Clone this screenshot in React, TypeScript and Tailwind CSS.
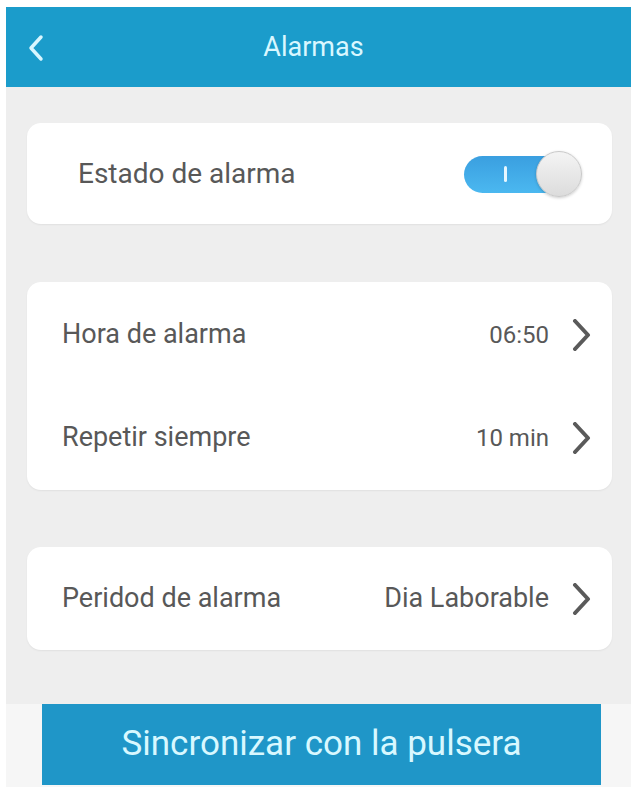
import React from 'react';

const font = { fontFamily: 'Roboto, "Noto Sans", Arial, sans-serif' };

function Chevron() {
  return (
    <svg width="20" height="32" viewBox="0 0 20 32" className="ml-[22px] shrink-0">
      <path d="M4 2 L17 16 L4 30" fill="none" stroke="#5a5a5a" strokeWidth="4" strokeLinecap="round" strokeLinejoin="round" />
    </svg>
  );
}

function Row({ label, value, small }: { label: string; value: string; small?: boolean }) {
  return (
    <div className="flex h-[103px] items-center pl-[35px] pr-[21px]">
      <span className="flex-1 text-[27px] text-[#585858]">{label}</span>
      <span className={small ? 'text-[24px] text-[#585858]' : 'text-[27px] text-[#585858]'}>{value}</span>
      <Chevron />
    </div>
  );
}

export default function App() {
  return (
    <div className="h-[787px] w-[637px] overflow-hidden bg-white px-[6px] pt-[7px]" style={font}>
      <header className="relative flex h-[80px] items-center justify-center bg-[#1b9ccb]">
        <svg width="20" height="28" viewBox="0 0 20 28" className="absolute left-[20px] top-[27px]">
          <path d="M15 3 L5 14 L15 25" fill="none" stroke="#d8f6ff" strokeWidth="3.5" strokeLinecap="round" strokeLinejoin="round" />
        </svg>
        <h1 className="-ml-[10px] text-[27px] text-[#d9f7ff]">Alarmas</h1>
      </header>

      <main className="flex h-[700px] flex-col bg-[#eeeeee] pl-[21px] pr-[19px] pt-[36px]">
        <section className="flex h-[101px] items-center rounded-[14px] bg-white pl-[51px] pr-[30px] shadow-[0_1px_2px_rgba(0,0,0,0.06)]">
          <span className="flex-1 text-[28px] text-[#585858]">Estado de alarma</span>
          <div className="relative h-[46px] w-[118px]">
            <div className="absolute left-0 top-[5px] flex h-[37px] w-[100px] items-center rounded-full bg-gradient-to-b from-[#3a9fe0] to-[#4bb8f0] pl-[40px]">
              <span className="h-[16px] w-[3px] rounded-full bg-[#e6f7ff]" />
            </div>
            <div className="absolute right-0 top-0 h-[46px] w-[46px] rounded-full border border-[#c9c9c9] bg-gradient-to-b from-[#f4f4f4] to-[#dcdcdc] shadow-[0_1px_3px_rgba(0,0,0,0.2)]" />
          </div>
        </section>

        <section className="mt-[58px] rounded-[14px] bg-white py-[1px] shadow-[0_1px_2px_rgba(0,0,0,0.06)]">
          <Row label="Hora de alarma" value="06:50" small />
          <Row label="Repetir siempre" value="10 min" small />
        </section>

        <section className="mt-[57px] rounded-[14px] bg-white shadow-[0_1px_2px_rgba(0,0,0,0.06)]">
          <Row label="Peridod de alarma" value="Dia Laborable" />
        </section>

        <div className="-ml-[21px] -mr-[19px] mt-[54px] flex-1 bg-[#f6f6f6] px-[36px]">
          <button className="flex h-[81px] w-[559px] items-center justify-center bg-[#1f96c8] text-[35px] text-[#d8f8ff]">
            Sincronizar con la pulsera
          </button>
        </div>
      </main>
    </div>
  );
}
